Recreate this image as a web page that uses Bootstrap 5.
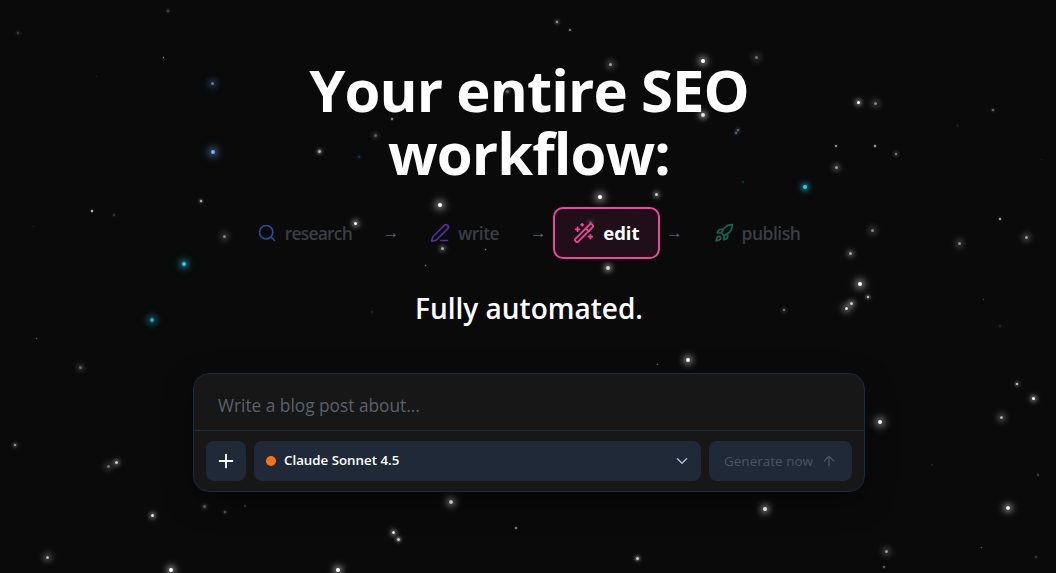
<!DOCTYPE html>
<html lang="en">
<head>
  <meta charset="UTF-8" />
  <meta name="viewport" content="width=device-width, initial-scale=1.0"/>
  <title>SEO workflow</title>
  <link href="https://cdn.jsdelivr.net/npm/bootstrap@5.3.3/dist/css/bootstrap.min.css" rel="stylesheet" />
  <style>
    html, body {
      height: 100%;
    }
    body {
      background-color: #0a0a0a;
      font-family: "Open Sans", "Noto Sans", sans-serif;
      overflow: hidden;
      position: relative;
    }
    #sky {
      position: absolute;
      inset: 0;
    }
    .star {
      position: absolute;
      border-radius: 50%;
    }
    .hero {
      position: relative;
      padding-top: 58px;
      padding-left: 2px;
    }
    .hero-title {
      width: 560px;
      font-size: 58px;
      line-height: 63px;
      font-weight: 700;
      letter-spacing: -.9px;
      color: #fff;
      text-align: center;
      margin-bottom: 23px;
    }
    .step-row {
      height: 52px;
      margin-left: -1px;
    }
    .step {
      height: 52px;
      padding: 0 22px;
      font-size: 17.5px;
      font-weight: 600;
      letter-spacing: -.5px;
      color: #3a3d44;
      border: 2px solid transparent;
      border-radius: 10px;
    }
    .step svg {
      width: 20px;
      height: 20px;
    }
    .step-first {
      letter-spacing: -.8px;
    }
    .step-on {
      padding: 0 18px;
      font-size: 18.5px;
      font-weight: 700;
      letter-spacing: 0;
      color: #fff;
      background-color: rgba(236, 72, 153, .1);
      border-color: #ec4899;
    }
    .step.step-on svg {
      width: 22px;
      height: 22px;
    }
    .step-arrow {
      width: 14px;
      color: #526178;
      font-family: "Liberation Sans", sans-serif;
      font-size: 17px;
      text-align: center;
      white-space: nowrap;
      display: flex;
      justify-content: center;
    }
    .sub-title {
      font-size: 28px;
      line-height: 36px;
      font-weight: 600;
      color: #fff;
      margin: 31px 0 47px;
    }
    .prompt-box {
      width: 672px;
      height: 119px;
      background-color: #171717;
      border: 1px solid #1e293b;
      border-radius: 16px;
      box-shadow: 0 10px 30px rgba(0, 0, 0, .35);
    }
    .prompt-input, .prompt-input:focus {
      height: 57px;
      padding: 6px 24px 0;
      font-size: 17.3px;
      color: #fff;
      background: transparent;
      border: 0;
      border-bottom: 1px solid #1e293b;
      border-radius: 0;
      box-shadow: none;
    }
    .prompt-input::placeholder {
      color: #5c606a;
    }
    .tool-row {
      padding: 10px 12px 0;
    }
    .tool-btn {
      height: 40px;
      background-color: #1f2937;
      border: 0;
      border-radius: 8px;
      color: #fff;
      font-size: 13.5px;
    }
    .tool-btn:hover, .tool-btn:disabled {
      background-color: #1f2937;
      color: #fff;
    }
    .add-btn {
      width: 40px;
    }
    .model-btn {
      font-size: 13.3px;
      font-weight: 600;
      padding: 0 10px 0 12px;
    }
    .model-dot {
      width: 10px;
      height: 10px;
      border-radius: 50%;
      background-color: #f97316;
    }
    .tool-btn.send-btn:disabled {
      width: 143px;
      opacity: 1;
      color: #4b5563;
    }
  </style>
</head>
<body>
  <div id="sky"></div>

  <div class="hero d-flex flex-column align-items-center">
    <h1 class="hero-title">Your entire SEO workflow:</h1>

    <div class="step-row d-flex align-items-center gap-2">
      <div class="step step-first d-flex align-items-center gap-2">
        <svg viewBox="0 0 24 24" fill="none" stroke="#234e96" stroke-width="2" stroke-linecap="round" stroke-linejoin="round"><circle cx="11" cy="11" r="8"/><path d="m21 21-4.3-4.3"/></svg>
        <span>research</span>
      </div>
      <span class="step-arrow">→</span>
      <div class="step d-flex align-items-center gap-2">
        <svg viewBox="0 0 24 24" fill="none" stroke="#54309a" stroke-width="2" stroke-linecap="round" stroke-linejoin="round"><path d="M13 21h8"/><path d="M21.174 6.812a1 1 0 0 0-3.986-3.987L3.842 16.174a2 2 0 0 0-.5.83l-1.321 4.352a.5.5 0 0 0 .623.622l4.353-1.32a2 2 0 0 0 .83-.497z"/></svg>
        <span>write</span>
      </div>
      <span class="step-arrow">→</span>
      <div class="step step-on d-flex align-items-center gap-2">
        <svg viewBox="0 0 24 24" fill="none" stroke="#ec4899" stroke-width="2" stroke-linecap="round" stroke-linejoin="round"><path d="m21.64 3.64-1.28-1.28a1.21 1.21 0 0 0-1.72 0L2.36 18.64a1.21 1.21 0 0 0 0 1.72l1.28 1.28a1.2 1.2 0 0 0 1.72 0L21.64 5.36a1.2 1.2 0 0 0 0-1.72"/><path d="m14 7 3 3"/><path d="M5 6v4"/><path d="M19 14v4"/><path d="M10 2v2"/><path d="M7 8H3"/><path d="M21 16h-4"/><path d="M11 3H9"/></svg>
        <span>edit</span>
      </div>
      <span class="step-arrow">→</span>
      <div class="step d-flex align-items-center gap-2">
        <svg viewBox="0 0 24 24" fill="none" stroke="#0f6a4e" stroke-width="2" stroke-linecap="round" stroke-linejoin="round"><path d="M4.5 16.5c-1.5 1.26-2 5-2 5s3.74-.5 5-2c.71-.84.7-2.13-.09-2.91a2.18 2.18 0 0 0-2.91-.09z"/><path d="m12 15-3-3a22 22 0 0 1 2-3.95A12.88 12.88 0 0 1 22 2c0 2.72-.78 7.5-6 11a22.35 22.35 0 0 1-4 2z"/><path d="M9 12H4s.55-3.03 2-4c1.62-1.08 5 0 5 0"/><path d="M12 15v5s3.03-.55 4-2c1.08-1.62 0-5 0-5"/></svg>
        <span>publish</span>
      </div>
    </div>

    <p class="sub-title">Fully automated.</p>

    <div class="prompt-box">
      <input type="text" class="form-control prompt-input" placeholder="Write a blog post about..." />
      <div class="tool-row d-flex gap-2">
        <button class="btn tool-btn add-btn p-0 d-flex align-items-center justify-content-center" type="button">
          <svg width="22" height="22" viewBox="0 0 24 24" fill="none" stroke="currentColor" stroke-width="2" stroke-linecap="round"><path d="M5 12h14"/><path d="M12 5v14"/></svg>
        </button>
        <button class="btn tool-btn model-btn flex-grow-1 d-flex align-items-center gap-2" type="button">
          <span class="model-dot"></span>
          <span>Claude Sonnet 4.5</span>
          <svg class="ms-auto" width="18" height="18" viewBox="0 0 24 24" fill="none" stroke="#b4b8c0" stroke-width="2" stroke-linecap="round" stroke-linejoin="round"><path d="m6 9 6 6 6-6"/></svg>
        </button>
        <button class="btn tool-btn send-btn p-0 d-flex align-items-center justify-content-center gap-2" type="button" disabled>
          <span>Generate now</span>
          <svg width="16" height="16" viewBox="0 0 24 24" fill="none" stroke="currentColor" stroke-width="2" stroke-linecap="round" stroke-linejoin="round"><path d="m5 12 7-7 7 7"/><path d="M12 19V5"/></svg>
        </button>
      </div>
    </div>
  </div>

  <script>
    // x, y, size, brightness, glow
    const white = '255,255,255', blue = '120,175,255', cyan = '34,211,238';
    const stars = [
      [168,11,2,.3,3],[18,33,2,.25,3],[163,57,1,.7,1],[212,83,3,.7,6,blue],[213,152,4,1,7,blue],[319,151,3,.7,3],[96,76,1,.12,1],
      [201,201,2,.8,2],[92,211,2,.8,1],[114,215,2,.2,2],[224,236,3,.5,6],[184,264,4,1,6,cyan],[152,320,4,.85,6,cyan],[36,338,1,.4,1],[80,367,3,.4,5],[33,226,1,.15,1],
      [15,445,2,.7,3],[108,466,3,.45,6],[116,462,3,.8,4],[152,515,3,.9,4],[204,506,3,.35,3],[225,512,2,.4,2],[245,506,2,.2,1],[47,557,3,.7,6],[171,570,4,1,6],[338,570,4,1,6],
      [703,61,4,1,6],[756,57,3,.45,6],[703,115,4,.9,5],[738,130,2,.45,3],[736,133,2,.6,2,blue],[858,102,3,1,4],[875,103,3,.5,6],[993,110,2,.4,2],[957,125,1,.2,2],[836,146,2,.6,1],[875,146,2,.7,1],[896,154,2,.55,3],[836,167,3,.6,5],[805,187,4,1,5,cyan],[1041,159,1,.12,1],[743,182,2,.2,2,cyan],
      [872,230,3,.5,6],[850,253,3,.65,5],[959,243,3,.55,6],[1026,237,3,.6,6],[1000,219,2,.7,1],[860,284,4,1,7],[868,297,2,.9,3],[851,303,3,.8,5],[846,308,3,.9,6],[784,310,2,.5,3],[983,299,1,.3,1],[1000,326,2,.15,3],
      [1017,384,2,.9,3],[1033,398,3,1,4],[1001,417,3,.7,6],[880,422,4,1,7],[932,465,2,.1,1],[1038,475,2,.25,1],[765,509,4,1,6],[1008,508,4,.95,6],[886,551,3,.6,6],[981,547,1,.4,1],[1036,557,2,.2,2],[884,567,2,.4,1],
      [355,223,3,1,5],[440,205,4,1,7],[442,248,3,.65,4],[485,249,1,.7,1],[425,265,1,.6,1],[600,197,4,1,7],[656,194,3,.8,4],[608,268,4,.85,5],[557,22,2,.7,3],[570,30,2,.5,1],[375,135,3,.35,4],[507,91,3,.35,3],[392,119,2,.6,1],[372,312,2,.12,2],[598,312,3,.3,4,blue],[688,360,4,1,6],[657,364,1,.5,1],[359,157,2,.3,3,cyan],[451,502,4,.9,6],[516,528,2,.5,1],[393,532,3,.9,4],[398,539,3,.8,3],[637,558,3,.8,3],[610,64,3,.65,6],[590,222,3,.3,4]
    ];
    const sky = document.getElementById('sky');
    stars.forEach(([x, y, s, a, g, c = white]) => {
      const el = document.createElement('span');
      el.className = 'star';
      el.style.cssText = `left:${x - s / 2}px;top:${y - s / 2}px;width:${s}px;height:${s}px;background:rgba(${c},${a});box-shadow:0 0 ${g}px ${g / 4}px rgba(${c},${a * .65}),0 0 ${g * 2}px ${g / 3}px rgba(${c},${a * .25})`;
      sky.appendChild(el);
    });
  </script>
  <script src="https://cdn.jsdelivr.net/npm/bootstrap@5.3.3/dist/js/bootstrap.bundle.min.js"></script>
</body>
</html>
